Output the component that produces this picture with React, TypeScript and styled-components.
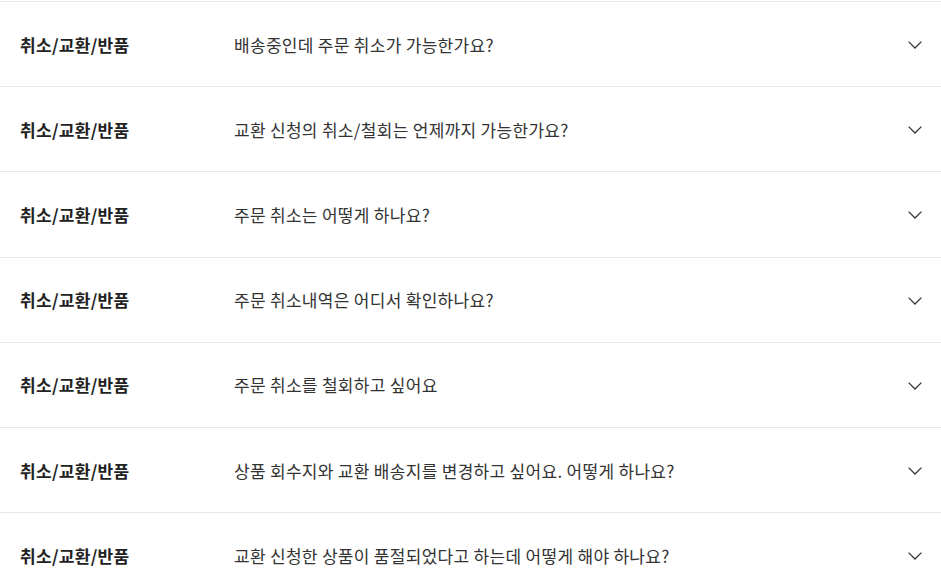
import React from 'react';
import styled, { createGlobalStyle } from 'styled-components';

const GlobalStyle = createGlobalStyle`
  body {
    margin: 0;
    background: #fff;
    font-family: "Noto Sans CJK KR", "Noto Sans", sans-serif;
  }
`;

const List = styled.ul`
  list-style: none;
  margin: 0;
  padding: 1px 0 0;
`;

const Item = styled.li`
  display: flex;
  align-items: center;
  height: 84.2px;
  padding: 0 19px 0 20px;
  border-top: 1px solid #e8e8e8;
  cursor: pointer;
`;

const Category = styled.span`
  flex: 0 0 214px;
  font-size: 17px;
  font-weight: 700;
  color: #222;
  letter-spacing: 0.3px;
`;

const Question = styled.span`
  flex: 1;
  font-size: 17px;
  color: #333;
  letter-spacing: 0.3px;
`;

const Chevron = styled.svg`
  flex: 0 0 auto;
  width: 14px;
  height: 8px;
  margin-top: 2px;
`;

interface Faq {
  category: string;
  question: string;
}

const faqs: Faq[] = [
  { category: '취소/교환/반품', question: '배송중인데 주문 취소가 가능한가요?' },
  { category: '취소/교환/반품', question: '교환 신청의 취소/철회는 언제까지 가능한가요?' },
  { category: '취소/교환/반품', question: '주문 취소는 어떻게 하나요?' },
  { category: '취소/교환/반품', question: '주문 취소내역은 어디서 확인하나요?' },
  { category: '취소/교환/반품', question: '주문 취소를 철회하고 싶어요' },
  { category: '취소/교환/반품', question: '상품 회수지와 교환 배송지를 변경하고 싶어요. 어떻게 하나요?' },
  { category: '취소/교환/반품', question: '교환 신청한 상품이 품절되었다고 하는데 어떻게 해야 하나요?' },
];

const App: React.FC = () => {
  return (
    <>
      <GlobalStyle />
      <List>
        {faqs.map((f, i) => (
          <Item key={i}>
            <Category>{f.category}</Category>
            <Question>{f.question}</Question>
            <Chevron viewBox="0 0 14 8" fill="none">
              <path d="M0.6 0.6 L7 7 L13.4 0.6" stroke="#333" strokeWidth="1.3" />
            </Chevron>
          </Item>
        ))}
      </List>
    </>
  );
};

export default App;
